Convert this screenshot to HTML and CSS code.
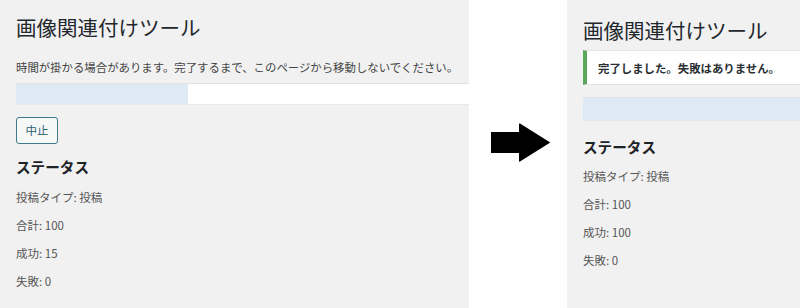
FILE: index.html
```html
<!DOCTYPE html>
<html lang="ja">
<head>
<meta charset="utf-8">
<link rel="stylesheet" href="styles.css">
</head>
<body>
<div class="canvas">
  <section class="panel panel-left">
    <h1 class="title">画像関連付けツール</h1>
    <p class="desc">時間が掛かる場合があります。完了するまで、このページから移動しないでください。</p>
    <div class="bar"><div class="bar-fill" style="width:38%"></div></div>
    <button class="btn">中止</button>
    <h2 class="status-h">ステータス</h2>
    <div class="stats">
      <p>投稿タイプ: 投稿</p>
      <p>合計: 100</p>
      <p>成功: 15</p>
      <p>失敗: 0</p>
    </div>
  </section>
  <div class="middle">
    <svg class="arrow" width="60" height="40" viewBox="0 0 60 40">
      <path d="M0 9 H28 V1 Q28 0 29 0.6 L58.5 19 Q59.5 19.5 58.5 20 L29 38.4 Q28 39 28 38 V30 H0 Z" fill="#000"/>
    </svg>
  </div>
  <section class="panel panel-right">
    <h1 class="title">画像関連付けツール</h1>
    <div class="notice"><p>完了しました。失敗はありません。</p></div>
    <div class="bar bar-r"><div class="bar-fill" style="width:100%"></div></div>
    <h2 class="status-h">ステータス</h2>
    <div class="stats">
      <p>投稿タイプ: 投稿</p>
      <p>合計: 100</p>
      <p>成功: 100</p>
      <p>失敗: 0</p>
    </div>
  </section>
</div>
</body>
</html>
```
FILE: styles.css
```css
html, body {
  margin: 0;
  padding: 0;
  background: #fff;
}
body {
  font-family: "Noto Sans CJK JP", "Noto Sans", sans-serif;
  width: 800px;
  height: 308px;
  overflow: hidden;
}
.canvas {
  display: flex;
  height: 308px;
}
.panel {
  background: #f1f1f1;
  height: 308px;
  overflow: hidden;
  box-sizing: border-box;
  padding-left: 16px;
}
.panel-left {
  width: 469px;
  padding-top: 13px;
}
.middle {
  width: 98px;
  flex: none;
}
.arrow {
  display: block;
  margin-left: 22px;
  margin-top: 123px;
}
.panel-right {
  flex: 1;
  padding-top: 16px;
}
.title {
  margin: 0;
  font-size: 20.5px;
  line-height: 28px;
  font-weight: 400;
  color: #23282d;
  white-space: nowrap;
}
.desc {
  margin: 16px 0 0;
  font-size: 11.4px;
  line-height: 20px;
  color: #444;
  white-space: nowrap;
}
.bar {
  margin-top: 6px;
  height: 22px;
  background: #fff;
  border-top: 1px solid #e4e4e4;
  border-bottom: 1px solid #e8e8e8;
  box-sizing: border-box;
  display: flex;
}
.bar-fill {
  background: #dde9f5;
  height: 100%;
}
.bar-r {
  margin-top: 12px;
  height: 24px;
  border-color: #e6e6e6;
}
.btn {
  display: block;
  margin-top: 12px;
  height: 27px;
  width: 42px;
  padding: 0;
  box-sizing: border-box;
  background: #f6f7f7;
  border: 1px solid #3e7a8c;
  border-radius: 3px;
  color: #2c6071;
  font-family: "Noto Sans CJK JP", sans-serif;
  font-size: 11.5px;
  line-height: 25px;
}
.status-h {
  margin: 12px 0 0;
  font-size: 14.6px;
  line-height: 21px;
  font-weight: 700;
  color: #1d2327;
}
.panel-right .status-h {
  margin-top: 15px;
}
.stats {
  display: flex;
  flex-direction: column;
  gap: 8px;
  margin-top: 10px;
}
.panel-right .stats {
  margin-top: 9px;
}
.stats p {
  margin: 0;
  font-size: 11.5px;
  line-height: 20px;
  color: #555;
  white-space: nowrap;
}
.notice {
  margin-top: 6px;
  height: 35px;
  box-sizing: border-box;
  background: #fff;
  border: 1px solid #e3e3e3;
  border-left: 4px solid #5aa85e;
  padding-left: 11px;
  display: flex;
  align-items: center;
  width: 260px;
}
.notice p {
  margin: 0;
  font-size: 11.4px;
  font-weight: 700;
  color: #2a2f33;
  white-space: nowrap;
}
```
